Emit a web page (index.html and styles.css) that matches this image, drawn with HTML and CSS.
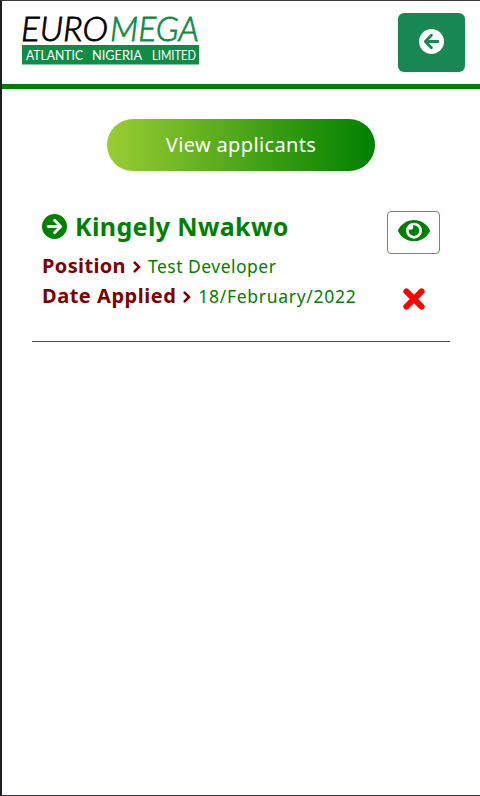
FILE: index.html
```
<!DOCTYPE html>
<html lang="en">
<head>
<meta charset="utf-8">
<title>View applicants</title>
<link rel="stylesheet" href="styles.css">
</head>
<body>
<header class="header">
  <svg class="logo" viewBox="0 0 178 50" role="img" aria-label="Euromega Atlantic Nigeria Limited">
    <text class="logo-name" x="-1" y="26" textLength="87" lengthAdjust="spacingAndGlyphs">EURO</text>
    <text class="logo-name logo-green" x="88" y="26" textLength="89" lengthAdjust="spacingAndGlyphs">MEGA</text>
    <rect x="0" y="30" width="177" height="19.5" fill="#118c45"/>
    <text class="logo-sub" x="4" y="44.5" textLength="57" lengthAdjust="spacingAndGlyphs">ATLANTIC</text>
    <text class="logo-sub" x="70" y="44.5" textLength="50" lengthAdjust="spacingAndGlyphs">NIGERIA</text>
    <text class="logo-sub" x="130" y="44.5" textLength="44" lengthAdjust="spacingAndGlyphs">LIMITED</text>
  </svg>
  <button class="back" aria-label="Back">
    <svg class="circle-icon" viewBox="0 0 512 512"><circle cx="256" cy="256" r="256" fill="#fff"/><path d="M388 256H136M254 126L130 256l124 130" stroke="#198754"/></svg>
  </button>
</header>
<main class="content">
  <button class="view">View applicants</button>
  <article class="applicant">
    <div class="details">
      <h2 class="name"><svg class="circle-icon" viewBox="0 0 512 512"><circle cx="256" cy="256" r="256" fill="green"/><path d="M124 256h252M258 126l124 130-124 130" stroke="#fff"/></svg><span>Kingely Nwakwo</span></h2>
      <div class="row"><b class="label position">Position</b><svg class="chevron" viewBox="0 0 8 12"><path d="M1.7 1.7L6 6l-4.3 4.3"/></svg><span class="value job">Test Developer</span></div>
      <div class="row"><b class="label applied">Date Applied</b><svg class="chevron" viewBox="0 0 8 12"><path d="M1.7 1.7L6 6l-4.3 4.3"/></svg><span class="value date">18/February/2022</span></div>
    </div>
    <div class="actions">
      <button class="show" aria-label="View"><svg class="eye" viewBox="0 64 576 384"><path d="M572.52 241.4C518.29 135.59 410.93 64 288 64S57.68 135.64 3.48 241.41a32.35 32.35 0 0 0 0 29.19C57.71 376.41 165.07 448 288 448s230.32-71.64 284.52-177.41a32.35 32.35 0 0 0 0-29.19zM288 400a144 144 0 1 1 144-144 143.93 143.93 0 0 1-144 144zm0-240a95.31 95.31 0 0 0-25.31 3.79 47.85 47.85 0 0 1-66.9 66.9A95.78 95.78 0 1 0 288 160z"/></svg></button>
      <svg class="remove" viewBox="0 0 22 22"><path d="M3.4 3.4l15.2 15.2M18.6 3.4L3.4 18.6"/></svg>
    </div>
  </article>
</main>
</body>
</html>
```
FILE: styles.css
```
* { box-sizing: border-box; }
body {
  margin: 0;
  height: 796px;
  overflow: hidden;
  border: 1px solid #38363d;
  border-left: 2px solid #202024;
  border-right: 0;
  background: #fff;
  font-family: "Noto Sans", "Open Sans", sans-serif;
}
button { margin: 0; padding: 0; font: inherit; }
svg { display: block; flex: none; }
.header {
  display: flex;
  justify-content: space-between;
  align-items: flex-start;
  height: 88px;
  padding: 12px 15px 0 20px;
  border-bottom: 5px solid green;
}
.logo { width: 178px; height: 50px; margin-top: 2px; overflow: visible; }
.logo-name { font: italic 300 33.5px Lato, sans-serif; fill: #000; stroke: #000; stroke-width: .8px; }
.logo-green { fill: #118c45; stroke: #118c45; }
.logo-sub { font: 400 13px Lato, sans-serif; fill: #fff; }
.back {
  display: flex;
  justify-content: center;
  align-items: center;
  width: 67px;
  height: 59px;
  padding-bottom: 2px;
  border: 0;
  border-radius: 6px;
  background: #198754;
}
.circle-icon { width: 25px; height: 25px; }
.circle-icon path { fill: none; stroke-width: 58; stroke-linecap: round; stroke-linejoin: round; }
.content { padding: 30px 30px 0; }
.view {
  display: block;
  width: 268px;
  height: 52px;
  margin: 0 auto 0 75px;
  padding-bottom: 2px;
  border: 0;
  border-radius: 26px;
  background: linear-gradient(to right, yellowgreen, green);
  color: #fff;
  font-size: 20px;
  letter-spacing: .35px;
}
.applicant {
  display: flex;
  justify-content: space-between;
  height: 142px;
  margin-top: 29px;
  padding: 11px 10px 0;
  border-bottom: 1px solid green;
}
.name {
  display: flex;
  align-items: center;
  gap: 8px;
  height: 30px;
  margin: 0 0 10px;
  color: green;
  font-size: 25px;
  line-height: 30px;
  letter-spacing: .37px;
  white-space: nowrap;
}
.row { display: flex; align-items: center; height: 30px; white-space: nowrap; }
.label { color: maroon; font-size: 20px; line-height: 30px; }
.position { letter-spacing: .36px; }
.applied { letter-spacing: .52px; }
.chevron { width: 8px; height: 12px; margin: 2px 7px 0; }
.chevron path { fill: none; stroke: maroon; stroke-width: 2.6; stroke-linecap: round; }
.value { color: green; font-size: 17.5px; line-height: 30px; }
.job { letter-spacing: .48px; }
.date { letter-spacing: .7px; }
.actions { display: flex; flex-direction: column; align-items: center; width: 53px; }
.show {
  display: flex;
  justify-content: center;
  width: 53px;
  height: 43px;
  padding-top: 8px;
  border: 1px solid #41b02c;
  border-radius: 4px;
  background: #fff;
}
.eye { width: 32px; height: 21.3px; fill: green; }
.remove { width: 22px; height: 22px; margin-top: 34px; }
.remove path { fill: none; stroke: red; stroke-width: 6; stroke-linecap: round; }
```
